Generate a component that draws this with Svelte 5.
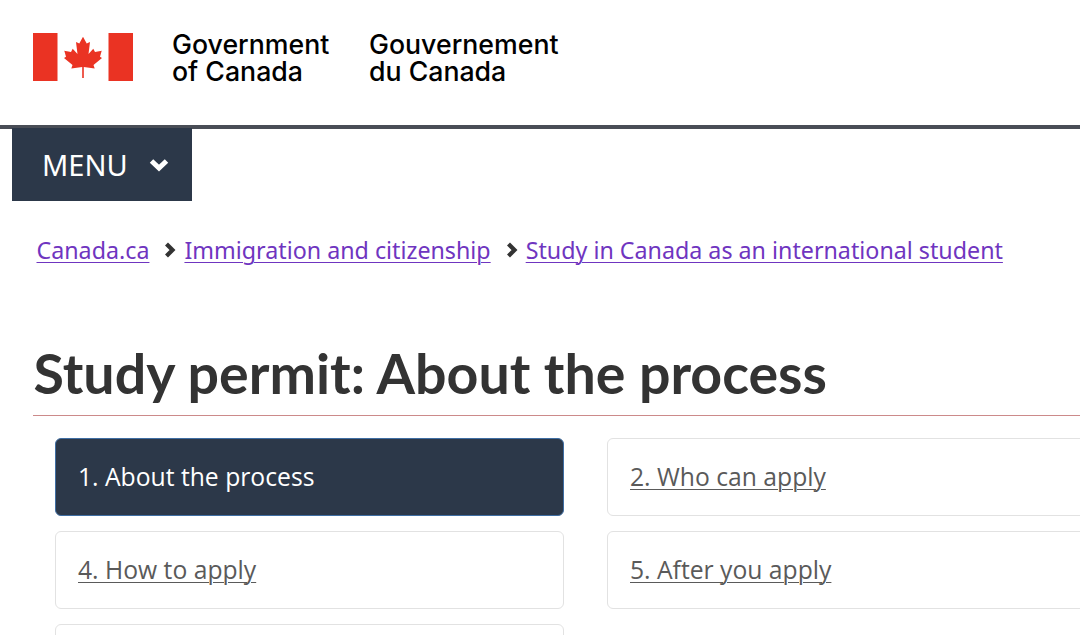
<script>
  const steps = [
    { label: '1. About the process', active: true },
    { label: '2. Who can apply' },
    { label: '4. How to apply' },
    { label: '5. After you apply' }
  ];
</script>

<div class="page">
  <header class="brand">
    <svg class="flag" viewBox="0 0 100 48" aria-hidden="true">
      <rect x="0" y="0" width="24.5" height="48" fill="#ea3323"/>
      <rect x="75.5" y="0" width="24.5" height="48" fill="#ea3323"/>
      <path fill="#ea3323" d="M50 3.7 L46.3 10.5 L43 9 L44.5 21 L39.7 15.8 L38 19 L31.3 17.8 L33 23.8 L31 25 L39.5 32 L38.3 35.5 L49.2 34 L49.2 45 L50.8 45 L50.8 34 L61.7 35.5 L60.5 32 L69 25 L67 23.8 L68.7 17.8 L62 19 L60.3 15.8 L55.5 21 L57 9 L53.7 10.5 Z"/>
    </svg>
    <div class="wordmark en">Government<br/>of Canada</div>
    <div class="wordmark fr">Gouvernement<br/>du Canada</div>
  </header>

  <nav class="menu-row">
    <button class="menu">
      <span>MENU</span>
      <svg class="chev" viewBox="0 0 20 14" aria-hidden="true">
        <path d="M2.5 3 L10 10 L17.5 3" fill="none" stroke="#fff" stroke-width="5"/>
      </svg>
    </button>
  </nav>

  <ol class="crumbs">
    <li><a href="#a">Canada.ca</a></li>
    <li>
      <svg class="sep" viewBox="0 0 12 16" aria-hidden="true"><path d="M2.5 2 L8.5 8 L2.5 14" fill="none" stroke="#333" stroke-width="4.2"/></svg>
      <a href="#a">Immigration and citizenship</a>
    </li>
    <li>
      <svg class="sep" viewBox="0 0 12 16" aria-hidden="true"><path d="M2.5 2 L8.5 8 L2.5 14" fill="none" stroke="#333" stroke-width="4.2"/></svg>
      <a href="#a">Study in Canada as an international student</a>
    </li>
  </ol>

  <h1>Study permit: About the process</h1>
  <div class="rule"></div>

  <div class="steps">
    {#each steps as s}
      <div class="step" class:active={s.active}>
        {#if s.active}<span>{s.label}</span>{:else}<a href="#a">{s.label}</a>{/if}
      </div>
    {/each}
    <div class="step"></div>
  </div>
</div>

<style>
  :global(body) { margin: 0; background: #fff; overflow: hidden; }
  .page { width: 1080px; height: 635px; overflow: hidden; font-family: "Noto Sans", "Open Sans", sans-serif; }
  .brand { display: flex; align-items: center; height: 125px; box-sizing: border-box; padding: 0 0 12px 33px; }
  .flag { width: 100px; height: 48px; flex: none; }
  .wordmark { font-family: Inter, "Liberation Sans", sans-serif; font-weight: 500; font-size: 26.7px; line-height: 27.5px; color: #000; padding-top: 3px; white-space: nowrap; }
  .en { margin-left: 39px; width: 197px; }
  .menu-row { border-top: 4px solid #494d56; height: 73px; padding-left: 12px; }
  .menu { display: flex; align-items: center; width: 180px; height: 73px; margin-top: -1px; box-sizing: border-box; padding: 0 0 0 30px; border: 0; background: #2c3849; color: #fff; font-family: inherit; font-size: 29px; }
  .chev { width: 20px; height: 14px; margin-left: 21px; }
  .crumbs { list-style: none; display: flex; margin: 30px 0 0 36.5px; padding: 0; font-size: 23.25px; line-height: 36px; }
  .crumbs li { display: flex; align-items: center; }
  .crumbs a { color: #6f35c0; text-decoration: underline; text-underline-offset: 3px; text-decoration-thickness: 1px; white-space: nowrap; }
  .sep { width: 12px; height: 16px; margin: 0 8px 0 15px; }
  h1 { margin: 70px 0 0 33.5px; font-family: Lato, sans-serif; font-weight: 700; font-size: 55.5px; line-height: 70px; color: #333; white-space: nowrap; }
  .rule { height: 1px; margin: 7px 0 0 33px; background: #cc8a8a; }
  .steps { display: grid; grid-template-columns: 509px 509px; column-gap: 43px; row-gap: 15px; margin: 22px 0 0 55px; }
  .step { height: 78px; box-sizing: border-box; border: 1.5px solid #e2e2e2; border-radius: 6px; background: #fff; display: flex; align-items: center; padding: 0 0 2px 22px; font-family: "Open Sans", "Noto Sans", sans-serif; font-size: 24.7px; }
  .step a { color: #5a5a5a; text-decoration: underline; text-underline-offset: 3px; text-decoration-thickness: 1px; }
  .step.active { background: #2c3849; border-color: #3f6ea3; color: #fff; }
</style>
